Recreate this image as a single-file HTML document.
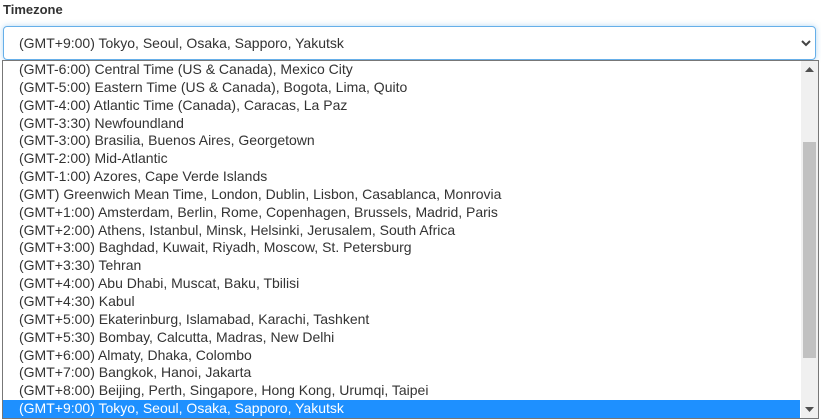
<!DOCTYPE html>
<html><head><style>
body{margin:0;width:821px;height:420px;background:#fff;font-family:"Liberation Sans",Arial,sans-serif;overflow:hidden;position:relative;color:#222}
.lbl{position:absolute;left:3px;top:2px;font-weight:bold;font-size:13px;color:#333}
.sel{position:absolute;left:3px;top:26px;width:811px;height:32px;border:1px solid #66afe9;border-radius:4px;box-shadow:0 0 6px rgba(102,175,233,.5);box-sizing:content-box}
.sel span{position:absolute;left:15px;top:8px;font-size:14px;color:#333}
.sel svg{position:absolute;right:4px;top:12px}
.dd{position:absolute;left:2px;top:60px;width:815px;height:357px;border:1px solid #777;background:#fff;overflow:hidden}
.row{height:17.85px;line-height:17px;font-size:14px;padding-left:16px;color:#333;white-space:nowrap}
.row.hl{background:#1e90ff;color:#fff;margin-right:18px}
.sb{position:absolute;right:0;top:0;width:17px;height:357px;background:#f0f0f0}
.th{position:absolute;left:2px;top:81px;width:13px;height:216px;background:#c1c1c1}
</style></head><body>
<div class="lbl">Timezone</div>
<div class="sel"><span>(GMT+9:00) Tokyo, Seoul, Osaka, Sapporo, Yakutsk</span>
<svg width="10" height="8" viewBox="0 0 10 8"><path d="M1 2l4 4 4-4" stroke="#444" stroke-width="2" fill="none"/></svg></div>
<div class="dd">
<div class="row">(GMT-6:00) Central Time (US &amp; Canada), Mexico City</div>
<div class="row">(GMT-5:00) Eastern Time (US &amp; Canada), Bogota, Lima, Quito</div>
<div class="row">(GMT-4:00) Atlantic Time (Canada), Caracas, La Paz</div>
<div class="row">(GMT-3:30) Newfoundland</div>
<div class="row">(GMT-3:00) Brasilia, Buenos Aires, Georgetown</div>
<div class="row">(GMT-2:00) Mid-Atlantic</div>
<div class="row">(GMT-1:00) Azores, Cape Verde Islands</div>
<div class="row">(GMT) Greenwich Mean Time, London, Dublin, Lisbon, Casablanca, Monrovia</div>
<div class="row">(GMT+1:00) Amsterdam, Berlin, Rome, Copenhagen, Brussels, Madrid, Paris</div>
<div class="row">(GMT+2:00) Athens, Istanbul, Minsk, Helsinki, Jerusalem, South Africa</div>
<div class="row">(GMT+3:00) Baghdad, Kuwait, Riyadh, Moscow, St. Petersburg</div>
<div class="row">(GMT+3:30) Tehran</div>
<div class="row">(GMT+4:00) Abu Dhabi, Muscat, Baku, Tbilisi</div>
<div class="row">(GMT+4:30) Kabul</div>
<div class="row">(GMT+5:00) Ekaterinburg, Islamabad, Karachi, Tashkent</div>
<div class="row">(GMT+5:30) Bombay, Calcutta, Madras, New Delhi</div>
<div class="row">(GMT+6:00) Almaty, Dhaka, Colombo</div>
<div class="row">(GMT+7:00) Bangkok, Hanoi, Jakarta</div>
<div class="row">(GMT+8:00) Beijing, Perth, Singapore, Hong Kong, Urumqi, Taipei</div>
<div class="row hl">(GMT+9:00) Tokyo, Seoul, Osaka, Sapporo, Yakutsk</div>
<div class="sb"><svg style="position:absolute;left:4px;top:6px" width="9" height="5"><path d="M0 5L4.5 0 9 5z" fill="#505050"/></svg>
<div class="th"></div>
<svg style="position:absolute;left:4px;top:346px" width="9" height="5"><path d="M0 0L4.5 5 9 0z" fill="#505050"/></svg></div>
</div>
</body></html>
